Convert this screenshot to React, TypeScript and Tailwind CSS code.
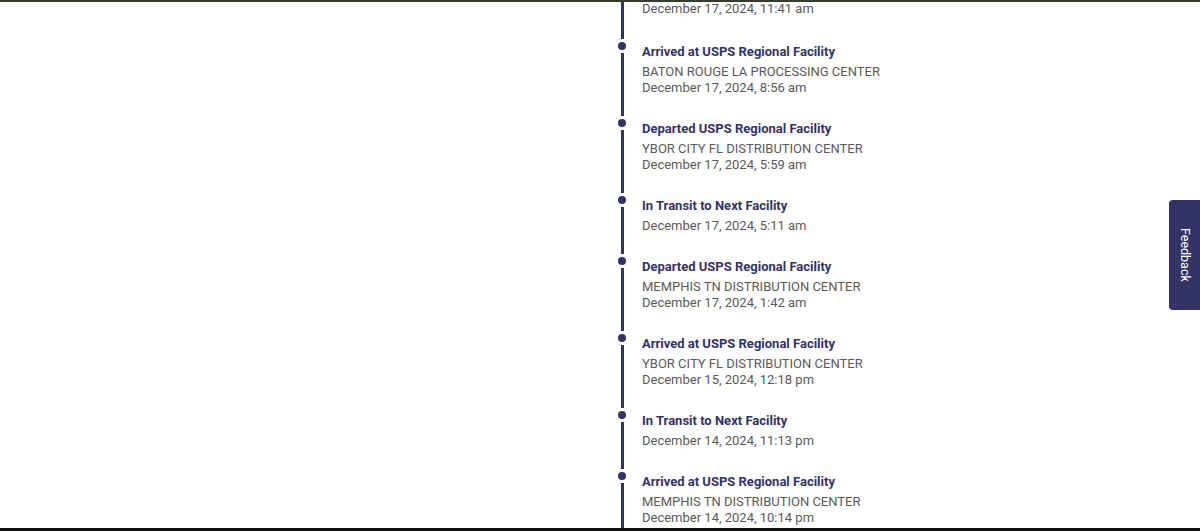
import React from "react";

type TrackingEvent = {
  status: string;
  location?: string;
  date: string;
};

const events: TrackingEvent[] = [
  { status: "Arrived at USPS Regional Facility", location: "BATON ROUGE LA PROCESSING CENTER", date: "December 17, 2024, 8:56 am" },
  { status: "Departed USPS Regional Facility", location: "YBOR CITY FL DISTRIBUTION CENTER", date: "December 17, 2024, 5:59 am" },
  { status: "In Transit to Next Facility", date: "December 17, 2024, 5:11 am" },
  { status: "Departed USPS Regional Facility", location: "MEMPHIS TN DISTRIBUTION CENTER", date: "December 17, 2024, 1:42 am" },
  { status: "Arrived at USPS Regional Facility", location: "YBOR CITY FL DISTRIBUTION CENTER", date: "December 15, 2024, 12:18 pm" },
  { status: "In Transit to Next Facility", date: "December 14, 2024, 11:13 pm" },
  { status: "Arrived at USPS Regional Facility", location: "MEMPHIS TN DISTRIBUTION CENTER", date: "December 14, 2024, 10:14 pm" },
];

const TimelineItem = ({ event }: { event: TrackingEvent }) => (
  <div className="flex gap-4">
    {/* Rail */}
    <div className="flex w-[8px] shrink-0 flex-col items-center">
      <div className="h-[8px] w-[8px] rounded-full bg-[#333366]" />
      <div className="mb-[3px] mt-[3px] w-[3px] flex-1 bg-[#333366]" />
    </div>
    <div className="pb-[23px] pt-px">
      <p className="mb-[3px] text-[13px] font-bold leading-[18px] text-[#333366]">{event.status}</p>
      {event.location && (
        <p className="text-[13px] leading-[16px] text-[#5a5a5a]">{event.location}</p>
      )}
      <p className="text-[13px] leading-[16px] text-[#5a5a5a]">{event.date}</p>
    </div>
  </div>
);

export default function App() {
  return (
    <div className="relative flex h-[531px] w-[1200px] flex-col overflow-hidden bg-white font-['Roboto',Arial,sans-serif]">
      <div className="h-[2px] shrink-0 bg-[#333d2e]" />

      <div className="flex-1 overflow-hidden pl-[618px]">
        {/* Tail of the previous event, cut off by the scroll */}
        <div className="flex gap-4">
          <div className="flex w-[8px] shrink-0 flex-col items-center">
            <div className="mb-[3px] w-[3px] flex-1 bg-[#333366]" />
          </div>
          <div className="-mt-px pb-[25px]">
            <p className="text-[13px] leading-[16px] text-[#5a5a5a]">December 17, 2024, 11:41 am</p>
          </div>
        </div>

        {events.map((event, i) => (
          <TimelineItem key={i} event={event} />
        ))}
      </div>

      <div className="h-[3px] shrink-0 bg-[#111111]" />

      {/* Feedback tab */}
      <button className="absolute right-0 top-[200px] flex h-[110px] w-[31px] items-center justify-center rounded-l-[4px] bg-[#333366] text-[12.5px] text-white [writing-mode:vertical-rl]">
        Feedback
      </button>
    </div>
  );
}
